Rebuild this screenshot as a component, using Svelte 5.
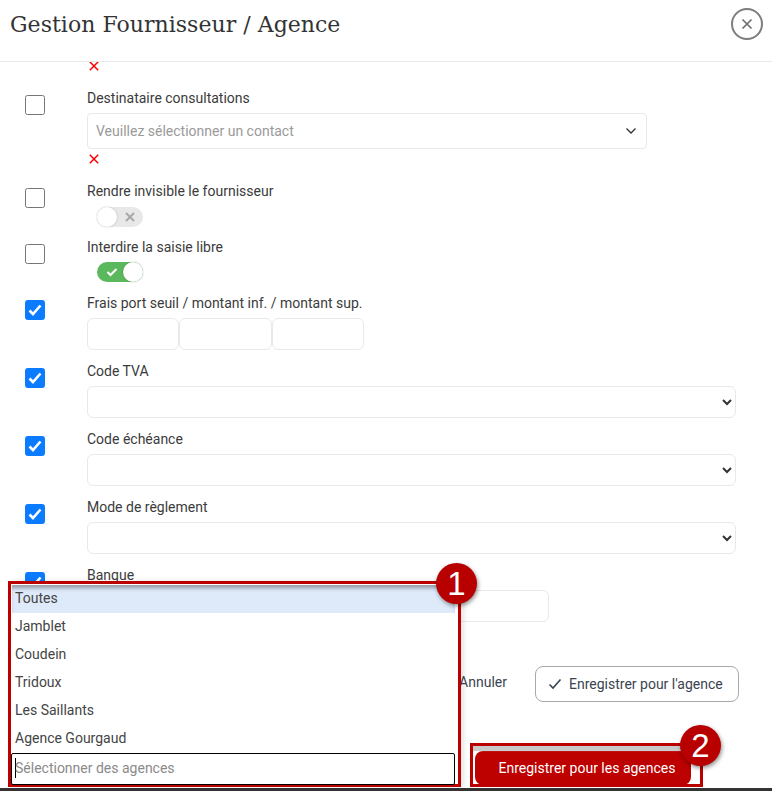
<script>
  const agences = ["Toutes", "Jamblet", "Coudein", "Tridoux", "Les Saillants", "Agence Gourgaud"];
  const fields = ["Code TVA", "Code échéance", "Mode de règlement"];
</script>

<div class="page">
  <header>
    <h1>Gestion Fournisseur / Agence</h1>
    <button class="close" aria-label="Fermer">
      <svg width="12" height="12" viewBox="0 0 12 12"><path d="M1.5 1.5l9 9M10.5 1.5l-9 9" /></svg>
    </button>
  </header>

  <div class="body">
    <svg class="err first" width="10" height="10" viewBox="0 0 10 10"><path d="M.8.8l8.4 8.4M9.2.8L.8 9.2" /></svg>

    <div class="row">
      <span class="box"></span>
      <div class="field">
        <div class="label">Destinataire consultations</div>
        <div class="fake-select">
          <span>Veuillez sélectionner un contact</span>
          <svg width="12" height="8" viewBox="0 0 12 8"><path d="M1.5 1.5L6 6l4.5-4.5" /></svg>
        </div>
        <svg class="err" width="10" height="10" viewBox="0 0 10 10"><path d="M.8.8l8.4 8.4M9.2.8L.8 9.2" /></svg>
      </div>
    </div>

    <div class="row tight">
      <span class="box"></span>
      <div class="field">
        <div class="label gap6">Rendre invisible le fournisseur</div>
        <div class="toggle off">
          <span class="knob"></span>
          <svg width="10" height="10" viewBox="0 0 10 10"><path d="M1 1l8 8M9 1l-8 8" /></svg>
        </div>
      </div>
    </div>

    <div class="row">
      <span class="box"></span>
      <div class="field">
        <div class="label">Interdire la saisie libre</div>
        <div class="toggle on">
          <svg width="12" height="10" viewBox="0 0 12 10"><path d="M1.5 5l3 3 6-6" /></svg>
          <span class="knob"></span>
        </div>
      </div>
    </div>

    <div class="row">
      <span class="box checked"><svg width="14" height="12" viewBox="0 0 14 12"><path d="M1.5 6.5l3.5 3.5 7.5-8.5" /></svg></span>
      <div class="field">
        <div class="label">Frais port seuil / montant inf. / montant sup.</div>
        <div class="triple">
          <input type="text" />
          <input type="text" />
          <input type="text" />
        </div>
      </div>
    </div>

    {#each fields as f}
      <div class="row">
        <span class="box checked"><svg width="14" height="12" viewBox="0 0 14 12"><path d="M1.5 6.5l3.5 3.5 7.5-8.5" /></svg></span>
        <div class="field">
          <div class="label">{f}</div>
          <select></select>
        </div>
      </div>
    {/each}

    <div class="row">
      <span class="box checked"><svg width="14" height="12" viewBox="0 0 14 12"><path d="M1.5 6.5l3.5 3.5 7.5-8.5" /></svg></span>
      <div class="field">
        <div class="label">Banque</div>
        <input class="banque" type="text" />
      </div>
    </div>

    <div class="actions">
      <span class="cancel">Annuler</span>
      <button class="save">
        <svg width="14" height="12" viewBox="0 0 14 12"><path d="M1.5 6.5l3.5 3.5 7.5-8.5" /></svg>
        Enregistrer pour l'agence
      </button>
    </div>

    <div class="actions second">
      <button class="save-all">Enregistrer pour les agences</button>
    </div>
  </div>

  <div class="bar"></div>

  <div class="dropdown">
    <ul>
      {#each agences as a, i}
        <li class:active={i === 0}>{a}</li>
      {/each}
    </ul>
    <div class="search"><span class="caret"></span>Sélectionner des agences</div>
  </div>

  <div class="callout-frame"></div>
  <span class="badge one">1</span>
  <span class="badge two">2</span>
</div>

<style>
  :global(body) {
    margin: 0;
    background: #fff;
  }

  .page {
    position: relative;
    display: flex;
    flex-direction: column;
    width: 772px;
    height: 791px;
    overflow: hidden;
    font-family: Roboto, sans-serif;
    font-size: 14px;
    color: #3b3b3b;
  }

  header {
    display: flex;
    align-items: center;
    justify-content: space-between;
    flex: none;
    box-sizing: border-box;
    height: 62px;
    padding: 0 9px 13px 10px;
    border-bottom: 1px solid #e9e9e9;
  }

  h1 {
    margin: 0;
    font-family: "DejaVu Serif", serif;
    font-size: 22px;
    font-weight: 400;
    letter-spacing: 0.03px;
    color: #333;
  }

  .close {
    display: flex;
    align-items: center;
    justify-content: center;
    box-sizing: border-box;
    width: 32px;
    height: 32px;
    padding: 0;
    background: #fff;
    border: 2px solid #7d7d7d;
    border-radius: 50%;
  }

  .close path {
    fill: none;
    stroke: #707070;
    stroke-width: 1.7;
  }

  .body {
    flex: 1;
    min-height: 0;
    overflow: hidden;
  }

  .err {
    display: block;
    margin: 5px 0 6px 2px;
  }

  .err.first {
    margin: -1px 0 17px 89px;
  }

  .err path {
    fill: none;
    stroke: #f00;
    stroke-width: 1.5;
  }

  .row {
    display: flex;
    padding-left: 25px;
    margin-bottom: 11px;
  }

  .row.tight {
    margin-bottom: 10px;
  }

  .box {
    display: flex;
    align-items: center;
    justify-content: center;
    flex: none;
    box-sizing: border-box;
    width: 20px;
    height: 20px;
    margin: 7px 42px 0 0;
    background: #fff;
    border: 1px solid #767676;
    border-radius: 2.5px;
  }

  .box.checked {
    background: #0b7bff;
    border-color: #0b7bff;
  }

  .box path {
    fill: none;
    stroke: #fff;
    stroke-width: 2.6;
  }

  .field {
    flex: 1;
    min-width: 0;
    padding-right: 36px;
  }

  .label {
    height: 20px;
    margin-bottom: 5px;
    line-height: 20px;
  }

  .label.gap6 {
    margin-bottom: 6px;
  }

  .fake-select {
    display: flex;
    align-items: center;
    justify-content: space-between;
    box-sizing: border-box;
    width: 560px;
    height: 36px;
    padding: 0 9px 0 8px;
    color: #9a9a9a;
    border: 1px solid #e9e9e9;
    border-radius: 4px;
  }

  .fake-select path {
    fill: none;
    stroke: #333;
    stroke-width: 1.3;
  }

  .toggle {
    display: flex;
    align-items: center;
    box-sizing: border-box;
    width: 46px;
    height: 20px;
    margin-left: 10px;
    border-radius: 10px;
  }

  .toggle.off {
    justify-content: space-between;
    padding-right: 8px;
    background: #e8e8e8;
  }

  .toggle.off path {
    fill: none;
    stroke: #a8a8a8;
    stroke-width: 2;
  }

  .toggle.on {
    justify-content: space-between;
    padding-left: 9px;
    background: #5cb85c;
  }

  .toggle.on path {
    fill: none;
    stroke: #fff;
    stroke-width: 2;
  }

  .knob {
    width: 20px;
    height: 20px;
    background: #fff;
    border-radius: 50%;
    box-shadow: 0 0 2px rgba(0, 0, 0, 0.25);
  }

  .triple {
    display: flex;
  }

  input,
  select {
    display: block;
    box-sizing: border-box;
    height: 32px;
    background: #fff;
    border: 1px solid #e9e9e9;
    border-radius: 6px;
  }

  .triple input {
    width: 92.3px;
  }

  select {
    width: 649px;
    color: #333;
  }

  .banque {
    width: 462px;
  }

  .actions {
    display: flex;
    align-items: center;
    justify-content: flex-end;
    gap: 28px;
    padding-right: 33px;
    margin-top: 44px;
  }

  .cancel {
    padding-bottom: 4px;
    color: #3a4450;
  }

  .save {
    display: flex;
    align-items: center;
    gap: 7px;
    box-sizing: border-box;
    width: 204px;
    height: 36px;
    padding: 0 0 0 12px;
    font: inherit;
    color: #3a4450;
    background: #fff;
    border: 1px solid #a9a9a9;
    border-radius: 8px;
  }

  .save path {
    fill: none;
    stroke: #3a4450;
    stroke-width: 1.6;
  }

  .actions.second {
    padding-right: 81px;
    margin-top: 49px;
  }

  .save-all {
    width: 216px;
    height: 34px;
    padding: 0 0 0 8px;
    font: inherit;
    color: #fff;
    background: #bd0000;
    border: 0;
    border-radius: 8px;
  }

  .bar {
    flex: none;
    height: 3px;
    background: #333;
  }

  .dropdown {
    position: absolute;
    left: 8px;
    top: 581px;
    box-sizing: border-box;
    width: 453px;
    height: 206px;
    padding: 1px 3px 0 0;
    background: #fff;
    border: 3px solid #bb0000;
    box-shadow: 3px 0 5px rgba(0, 0, 0, 0.1);
  }

  ul {
    margin: 0;
    padding: 0;
    list-style: none;
  }

  li {
    height: 28px;
    padding-left: 4px;
    line-height: 26px;
    box-sizing: border-box;
    color: #444;
  }

  li.active {
    margin-left: 1px;
    padding-left: 3px;
    background: #deeafa;
    box-shadow: inset 0 5px 4px -2px rgba(0, 0, 0, 0.35);
  }

  .search {
    display: flex;
    align-items: center;
    box-sizing: border-box;
    height: 32px;
    padding: 0 0 2px 3px;
    color: #8a8a8a;
    background: #fff;
    border: 1px solid #000;
    border-radius: 2px;
  }

  .caret {
    width: 1px;
    height: 20px;
    margin-right: -1px;
    background: #000;
  }

  .callout-frame {
    position: absolute;
    left: 470px;
    top: 743px;
    box-sizing: border-box;
    width: 233px;
    height: 44px;
    border: 3px solid #bb0000;
    box-shadow: inset 0 5px 1px #c9c9c9;
  }

  .badge {
    position: absolute;
    box-sizing: border-box;
    width: 41px;
    height: 41px;
    font-family: "Liberation Sans", sans-serif;
    font-size: 33px;
    line-height: 41px;
    text-align: center;
    color: #fff;
    background: #b80000;
    border-radius: 50%;
    box-shadow: 1px 2px 4px rgba(0, 0, 0, 0.45);
  }

  .badge.one {
    left: 436px;
    top: 563px;
  }

  .badge.two {
    left: 680px;
    top: 725px;
  }
</style>
